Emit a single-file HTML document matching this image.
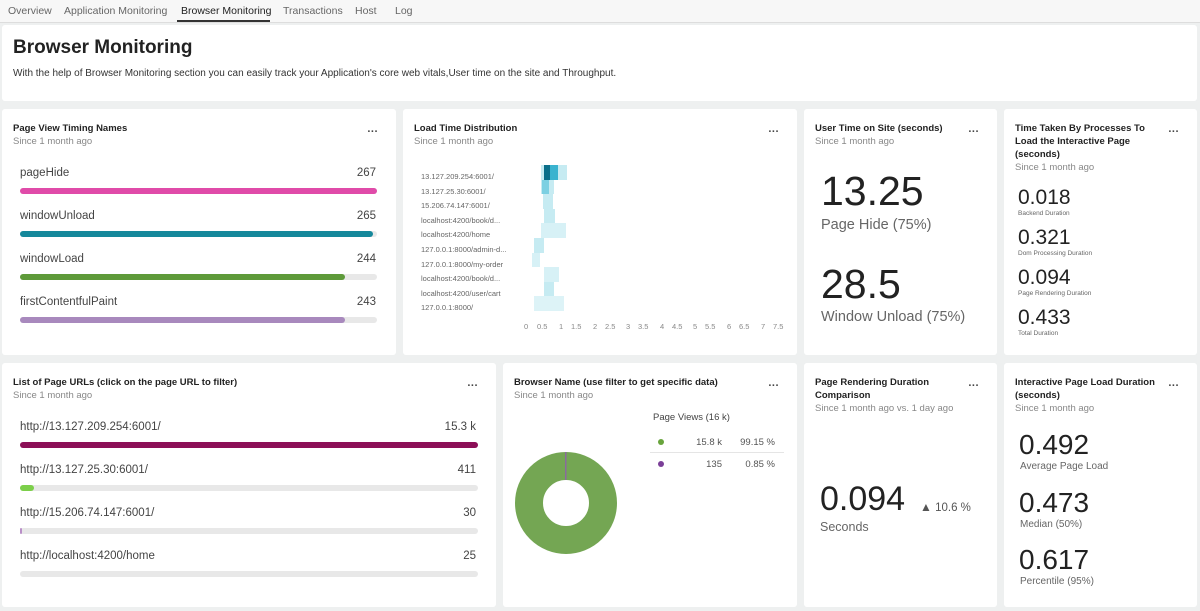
<!DOCTYPE html><html><head><style>
*{box-sizing:border-box;margin:0;padding:0}
body{width:1200px;height:611px;background:#eef0f0;font-family:"Liberation Sans",sans-serif;color:#333;position:relative;overflow:hidden}
.tabs{position:absolute;left:0;top:0;width:1200px;height:23px;background:#f7f7f7;border-bottom:1px solid #ddd;font-size:10.5px;color:#666}
.tabs span{position:absolute;top:5px}
.card{position:absolute;background:#fff;border-radius:3px}
.t{position:absolute;left:11px;top:13px;font-size:9.5px;font-weight:bold;color:#222;line-height:13px}
.s{font-size:9.5px;color:#888;font-weight:normal}
.dots{position:absolute;right:18px;top:14px;font-size:11px;font-weight:bold;color:#444;letter-spacing:0.5px}
.bar{position:absolute;height:6px;border-radius:3px;background:#e8e8e8}
.bar i{display:block;height:6px;border-radius:3px}
.lbl{position:absolute;font-size:11.5px;color:#444}
.big{position:absolute;font-size:41px;color:#222}
.sub{position:absolute;font-size:14.5px;color:#666}
.m{position:absolute;font-size:21px;color:#222}
.ms{position:absolute;font-size:6.5px;color:#666}
.lg{position:absolute;font-size:9.5px;color:#555}
</style></head><body>
<div class="tabs"><span style="left:8px">Overview</span><span style="left:64px">Application Monitoring</span><span style="left:181px;color:#222">Browser Monitoring</span><span style="left:283px">Transactions</span><span style="left:355px">Host</span><span style="left:395px">Log</span>
<div style="position:absolute;left:177px;top:20px;width:93px;height:2px;background:#333"></div></div>
<div class="card" style="left:2px;top:25px;width:1195px;height:76px">
<div style="position:absolute;left:11px;top:12px;font-size:19px;font-weight:bold;color:#222">Browser Monitoring</div>
<div style="position:absolute;left:11px;top:43px;font-size:10px;color:#333">With the help of Browser Monitoring section you can easily track your Application's core web vitals,User time on the site and Throughput.</div></div>

<div class="card" style="left:2px;top:109px;width:394px;height:246px">
<div class="t">Page View Timing Names<br><span class="s">Since 1 month ago</span></div><div class="dots">...</div>
<div class="lbl" style="left:18px;top:58px">pageHide</div><div class="lbl" style="right:20px;top:58px">267</div><div class="bar" style="left:18px;top:79px;width:357px"><i style="width:100%;background:#e04ba9"></i></div>
<div class="lbl" style="left:18px;top:101px">windowUnload</div><div class="lbl" style="right:20px;top:101px">265</div><div class="bar" style="left:18px;top:122px;width:357px"><i style="width:99%;background:#15889b"></i></div>
<div class="lbl" style="left:18px;top:144px">windowLoad</div><div class="lbl" style="right:20px;top:144px">244</div><div class="bar" style="left:18px;top:165px;width:357px"><i style="width:91%;background:#5e9a3a"></i></div>
<div class="lbl" style="left:18px;top:187px">firstContentfulPaint</div><div class="lbl" style="right:20px;top:187px">243</div><div class="bar" style="left:18px;top:208px;width:357px"><i style="width:91%;background:#a889bd"></i></div>
</div>

<div class="card" style="left:403px;top:109px;width:394px;height:246px">
<div class="t">Load Time Distribution<br><span class="s">Since 1 month ago</span></div><div class="dots">...</div>
<div style="position:absolute;left:18px;top:61px;font-size:7.5px;color:#666;line-height:14.6px">13.127.209.254:6001/<br>13.127.25.30:6001/<br>15.206.74.147:6001/<br>localhost:4200/book/d...<br>localhost:4200/home<br>127.0.0.1:8000/admin-d...<br>127.0.0.1:8000/my-order<br>localhost:4200/book/d...<br>localhost:4200/user/cart<br>127.0.0.1:8000/</div>
<svg style="position:absolute;left:0;top:0" width="394" height="246">
<g fill="#c6ebf2"><rect x="138" y="56" width="26" height="15"/><rect x="138" y="71" width="13" height="14"/><rect x="140" y="85" width="10" height="15"/><rect x="141" y="100" width="11" height="14"/><rect x="138" y="114" width="25" height="15" opacity=".7"/><rect x="131" y="129" width="10" height="15"/><rect x="129" y="144" width="8" height="14" opacity=".7"/><rect x="141" y="158" width="15" height="15" opacity=".7"/><rect x="141" y="173" width="10" height="14"/><rect x="131" y="187" width="30" height="15" opacity=".6"/></g>
<rect x="141" y="56" width="6" height="15" fill="#0a6f8a"/><rect x="147" y="56" width="8" height="15" fill="#3ab3cf"/><rect x="139" y="71" width="7" height="14" fill="#7cd0e2"/>
<g font-size="7.5" fill="#888" font-family="Liberation Sans"><text x="121" y="220">0</text><text x="134" y="220">0.5</text><text x="156" y="220">1</text><text x="168" y="220">1.5</text><text x="190" y="220">2</text><text x="202" y="220">2.5</text><text x="223" y="220">3</text><text x="235" y="220">3.5</text><text x="257" y="220">4</text><text x="269" y="220">4.5</text><text x="290" y="220">5</text><text x="302" y="220">5.5</text><text x="324" y="220">6</text><text x="336" y="220">6.5</text><text x="358" y="220">7</text><text x="370" y="220">7.5</text></g></svg>
</div>

<div class="card" style="left:804px;top:109px;width:193px;height:246px">
<div class="t">User Time on Site (seconds)<br><span class="s">Since 1 month ago</span></div><div class="dots">...</div>
<div class="big" style="left:17px;top:59px">13.25</div><div class="sub" style="left:17px;top:108px">Page Hide (75%)</div>
<div class="big" style="left:17px;top:152px">28.5</div><div class="sub" style="left:17px;top:200px">Window Unload (75%)</div></div>

<div class="card" style="left:1004px;top:109px;width:193px;height:246px">
<div class="t">Time Taken By Processes To<br>Load the Interactive Page<br>(seconds)<br><span class="s">Since 1 month ago</span></div><div class="dots">...</div>
<div class="m" style="left:14px;top:77px">0.018</div><div class="ms" style="left:14px;top:101px">Backend Duration</div>
<div class="m" style="left:14px;top:117px">0.321</div><div class="ms" style="left:14px;top:141px">Dom Processing Duration</div>
<div class="m" style="left:14px;top:157px">0.094</div><div class="ms" style="left:14px;top:181px">Page Rendering Duration</div>
<div class="m" style="left:14px;top:197px">0.433</div><div class="ms" style="left:14px;top:221px">Total Duration</div></div>

<div class="card" style="left:2px;top:363px;width:494px;height:244px">
<div class="t">List of Page URLs (click on the page URL to filter)<br><span class="s">Since 1 month ago</span></div><div class="dots">...</div>
<div class="lbl" style="left:18px;top:58px">http://13.127.209.254:6001/</div><div class="lbl" style="right:20px;top:58px">15.3 k</div><div class="bar" style="left:18px;top:79px;width:458px"><i style="width:100%;background:#8c0f57"></i></div>
<div class="lbl" style="left:18px;top:101px">http://13.127.25.30:6001/</div><div class="lbl" style="right:20px;top:101px">411</div><div class="bar" style="left:18px;top:122px;width:458px"><i style="width:3%;background:#7ccf4a"></i></div>
<div class="lbl" style="left:18px;top:144px">http://15.206.74.147:6001/</div><div class="lbl" style="right:20px;top:144px">30</div><div class="bar" style="left:18px;top:165px;width:458px"><i style="width:2px;background:#b98fc8"></i></div>
<div class="lbl" style="left:18px;top:187px">http://localhost:4200/home</div><div class="lbl" style="right:20px;top:187px">25</div><div class="bar" style="left:18px;top:208px;width:458px"></div>
</div>

<div class="card" style="left:503px;top:363px;width:294px;height:244px">
<div class="t">Browser Name (use filter to get specific data)<br><span class="s">Since 1 month ago</span></div><div class="dots">...</div>
<div style="position:absolute;left:150px;top:49px;font-size:9.5px;color:#444">Page Views (16 k)</div>
<div style="position:absolute;left:147px;top:89px;width:134px;height:1px;background:#e5e5e5"></div>
<svg style="position:absolute;left:0;top:0" width="294" height="244"><circle cx="158" cy="79" r="3" fill="#68a43c"/><circle cx="158" cy="101" r="3" fill="#7b3f98"/>
<circle cx="63" cy="140" r="37" fill="none" stroke="#74a653" stroke-width="28"/><rect x="62" y="89" width="1.5" height="28" fill="#8a6a9e"/></svg>
<div class="lg" style="right:75px;top:74px">15.8 k</div><div class="lg" style="right:22px;top:74px">99.15 %</div>
<div class="lg" style="right:75px;top:96px">135</div><div class="lg" style="right:22px;top:96px">0.85 %</div>
</div>

<div class="card" style="left:804px;top:363px;width:193px;height:244px">
<div class="t">Page Rendering Duration<br>Comparison<br><span class="s">Since 1 month ago vs. 1 day ago</span></div><div class="dots">...</div>
<div style="position:absolute;left:16px;top:117px;font-size:34px;color:#222">0.094</div>
<div style="position:absolute;left:116px;top:137px;font-size:11.5px;color:#555"><span style="font-size:12px;color:#555">▲</span> 10.6 %</div>
<div class="sub" style="left:16px;top:157px;font-size:12.5px">Seconds</div></div>

<div class="card" style="left:1004px;top:363px;width:193px;height:244px">
<div class="t">Interactive Page Load Duration<br>(seconds)<br><span class="s">Since 1 month ago</span></div><div class="dots">...</div>
<div class="m" style="left:15px;top:66px;font-size:28px">0.492</div><div class="sub" style="left:16px;top:98px;font-size:10px">Average Page Load</div>
<div class="m" style="left:15px;top:124px;font-size:28px">0.473</div><div class="sub" style="left:16px;top:156px;font-size:10px">Median (50%)</div>
<div class="m" style="left:15px;top:181px;font-size:28px">0.617</div><div class="sub" style="left:16px;top:213px;font-size:10px">Percentile (95%)</div></div>
</body></html>
